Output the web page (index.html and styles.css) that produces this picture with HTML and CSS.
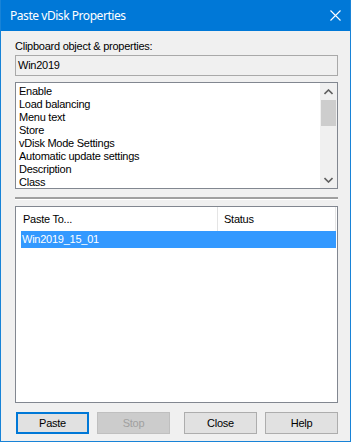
FILE: index.html
```html
<html>
    <head>
        <meta charset="utf-8">
        <title>Paste vDisk Properties</title>
        <link rel="stylesheet" href="styles.css">
    </head>
    <body>
        <div class="window">
            <div class="titlebar">
                <span class="title">Paste vDisk Properties</span>
                <svg class="close" width="11" height="11" viewBox="0 0 11 11">
                    <path d="M0.5 0.5 L10.5 10.5 M10.5 0.5 L0.5 10.5" stroke="#fff" stroke-width="1.1" fill="none"/>
                </svg>
            </div>

            <div class="content">
                <div class="label">Clipboard object &amp; properties:</div>
                <div class="textbox">Win2019</div>

                <div class="listbox">
                    <ul class="items">
                        <li>Enable</li>
                        <li>Load balancing</li>
                        <li>Menu text</li>
                        <li>Store</li>
                        <li>vDisk Mode Settings</li>
                        <li>Automatic update settings</li>
                        <li>Description</li>
                        <li>Class</li>
                    </ul>
                    <div class="scrollbar">
                        <div class="arrow">
                            <svg width="9" height="6" viewBox="0 0 9 6"><path d="M0.5 5 L4.5 1 L8.5 5" stroke="#606060" stroke-width="1.6" fill="none"/></svg>
                        </div>
                        <div class="track"><div class="thumb"></div></div>
                        <div class="arrow">
                            <svg width="9" height="6" viewBox="0 0 9 6"><path d="M0.5 1 L4.5 5 L8.5 1" stroke="#606060" stroke-width="1.6" fill="none"/></svg>
                        </div>
                    </div>
                </div>

                <div class="splitter"></div>

                <div class="listview">
                    <div class="header">
                        <div class="col col-name">Paste To...</div>
                        <div class="col col-status">Status</div>
                    </div>
                    <div class="row selected">Win2019_15_01</div>
                </div>

                <div class="buttons">
                    <button class="btn default">Paste</button>
                    <button class="btn disabled">Stop</button>
                    <button class="btn btn-close">Close</button>
                    <button class="btn btn-help">Help</button>
                </div>
            </div>
        </div>
    </body>
</html>
```

FILE: styles.css
```css
body {
    margin: 0;
    font-family: 'Liberation Sans', Arial, sans-serif;
    font-size: 11px;
    letter-spacing: -0.25px;
    color: #000;
}
.window {
    width: 351px;
    height: 442px;
    box-sizing: border-box;
    border: 1px solid #1883d7;
    border-top: none;
    background-color: #f0f0f0;
    display: flex;
    flex-direction: column;
}
.titlebar {
    height: 31px;
    flex: none;
    background-color: #0078d7;
    display: flex;
    align-items: center;
    padding: 0 9px 0 9px;
}
.title {
    flex: 1;
    color: #fff;
    font-family: 'Noto Sans', 'Open Sans', sans-serif;
    font-size: 12px;
    letter-spacing: -0.45px;
    padding-bottom: 1px;
}
.close {
    display: block;
    margin-top: -1px;
}
.content {
    padding: 9px 12px 0 14px;
    display: flex;
    flex-direction: column;
}
.label {
    line-height: 13px;
    height: 13px;
}
.textbox {
    margin-top: 2px;
    height: 21px;
    box-sizing: border-box;
    border: 1px solid #a9a9a9;
    background-color: #f0f0f0;
    padding-left: 2px;
    line-height: 19px;
}
.listbox {
    margin-top: 6px;
    height: 107px;
    box-sizing: border-box;
    border: 1px solid #828790;
    background-color: #fff;
    display: flex;
}
.items {
    flex: 1;
    list-style: none;
    margin: 0;
    padding: 2px 0 0 3px;
}
.items li {
    height: 13px;
    line-height: 13px;
}
.scrollbar {
    width: 17px;
    background-color: #f0f0f0;
    display: flex;
    flex-direction: column;
}
.arrow {
    height: 17px;
    display: flex;
    align-items: center;
    justify-content: center;
}
.track {
    flex: 1;
    padding: 0 1px;
}
.thumb {
    height: 26px;
    background-color: #cdcdcd;
}
.splitter {
    margin-top: 8px;
    height: 2px;
    background-color: #a0a0a0;
    border-bottom: 1px solid #fff;
}
.listview {
    margin-top: 6px;
    height: 197px;
    box-sizing: border-box;
    border: 1px solid #828790;
    background-color: #fff;
}
.header {
    display: flex;
    height: 24px;
}
.col {
    line-height: 24px;
    box-sizing: border-box;
    border-right: 1px solid #e5e5e5;
}
.col-name {
    width: 202px;
    padding-left: 7px;
}
.col-status {
    width: 118px;
    padding-left: 6px;
}
.row {
    margin-left: 5px;
    margin-right: 1px;
    height: 17px;
    line-height: 17px;
    padding-left: 1px;
}
.selected {
    background-color: #3399ff;
    color: #fff;
}
.buttons {
    margin-top: 9px;
    display: flex;
}
.btn {
    width: 73px;
    height: 22px;
    box-sizing: border-box;
    margin: 0;
    padding: 0;
    font-family: 'Liberation Sans', Arial, sans-serif;
    font-size: 11px;
    letter-spacing: -0.25px;
    color: #000;
    background-color: #e1e1e1;
    border: 1px solid #adadad;
    border-radius: 0;
}
.default {
    margin-left: 1px;
    border: 2px solid #0078d7;
}
.disabled {
    margin-left: 8px;
    background-color: #cccccc;
    border-color: #bfbfbf;
    color: #a0a0a0;
}
.btn-close {
    margin-left: 14px;
}
.btn-help {
    margin-left: 8px;
}
```
